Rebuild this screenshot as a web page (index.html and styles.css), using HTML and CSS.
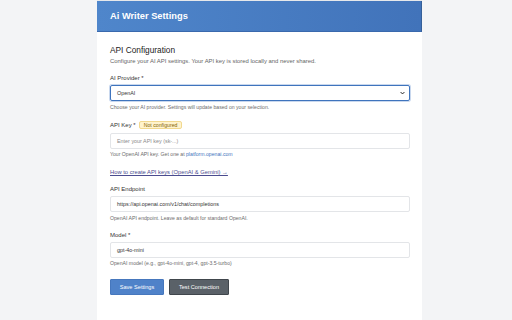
FILE: index.html
```html
<!DOCTYPE html>
<html lang="en">
<head>
<meta charset="utf-8">
<title>Ai Writer Settings</title>
<link rel="stylesheet" href="styles.css">
</head>
<body>
<div class="card">
  <header class="header"><h1 class="title">Ai Writer Settings</h1></header>
  <main class="content">
    <h2 class="section-title">API Configuration</h2>
    <p class="section-desc">Configure your AI API settings. Your API key is stored locally and never shared.</p>

    <div class="field">
      <label class="label">AI Provider *</label>
      <div class="select focused"><span>OpenAI</span><svg class="chev" viewBox="0 0 8 6" width="5" height="4"><path d="M1 1.5 L4 4.5 L7 1.5" fill="none" stroke="#222" stroke-width="1.6"/></svg></div>
      <p class="help">Choose your AI provider. Settings will update based on your selection.</p>
    </div>

    <div class="field">
      <div class="label-row"><label class="label">API Key *</label><span class="badge">Not configured</span></div>
      <div class="input placeholder">Enter your API key (sk-...)</div>
      <p class="help">Your OpenAI API key. Get one at <a class="help-link" href="#">platform.openai.com</a></p>
    </div>

    <a class="guide-link" href="#">How to create API keys (OpenAI &amp; Gemini) →</a>

    <div class="field">
      <label class="label">API Endpoint</label>
      <div class="input">https://api.openai.com/v1/chat/completions</div>
      <p class="help">OpenAI API endpoint. Leave as default for standard OpenAI.</p>
    </div>

    <div class="field">
      <label class="label">Model *</label>
      <div class="input">gpt-4o-mini</div>
      <p class="help">OpenAI model (e.g., gpt-4o-mini, gpt-4, gpt-3.5-turbo)</p>
    </div>

    <div class="actions">
      <button class="btn btn-primary">Save Settings</button>
      <button class="btn btn-secondary">Test Connection</button>
    </div>
  </main>
</div>
</body>
</html>
```

FILE: styles.css
```css
* { box-sizing: border-box; }
html, body { margin: 0; padding: 0; }
body {
  background: #f3f4f6;
  font-family: "Liberation Sans", Arial, sans-serif;
  color: #333;
}
.card {
  width: 325px;
  min-height: 320px;
  margin-left: 97px;
  background: #fff;
  border-top: 1px solid #e6e8eb;
}
.header {
  height: 31px;
  background: linear-gradient(90deg, #4f86cb 0%, #4173ba 100%);
  border-right: 1px solid #356099;
  border-bottom: 1px solid #3a69ad;
  display: flex;
  align-items: center;
  padding-left: 13px;
}
.title {
  margin: 0;
  color: #fff;
  font-size: 9.3px;
  font-weight: 700;
}
.content {
  padding: 13px 12px 0 13px;
}
.section-title {
  margin: 0;
  font-size: 8.3px;
  line-height: 10px;
  font-weight: 500;
  color: #222;
}
.section-desc {
  margin: 3px 0 0;
  font-size: 5.9px;
  line-height: 6px;
  color: #666;
}
.field { margin-top: 10px; }
.label-row { display: flex; align-items: center; gap: 3px; height: 10px; }
.label {
  display: block;
  font-size: 6px;
  line-height: 8px;
  color: #333;
}
.badge {
  font-size: 5.2px;
  line-height: 6px;
  padding: 0 4px;
  background: #fff3cd;
  border: 1px solid #f2d98f;
  border-radius: 2px;
  color: #856404;
}
.select, .input {
  margin-top: 3px;
  height: 16px;
  border: 1px solid #e3e5e8;
  border-radius: 2px;
  display: flex;
  align-items: center;
  padding: 0 6px;
  font-size: 5.4px;
  color: #333;
}
.select { justify-content: space-between; padding: 0 4px 0 6px; }
.select.focused {
  border-color: #3f74bd;
  box-shadow: 0 0 0 1px #c9d8ee;
}
.placeholder { color: #8a8a8a; }
.help {
  margin: 2.5px 0 0;
  font-size: 5.15px;
  line-height: 6px;
  color: #6b6b6b;
}
.help-link { color: #3f74bd; text-decoration: none; }
.guide-link {
  display: block;
  margin-top: 11px;
  font-size: 5.8px;
  line-height: 8px;
  color: #4b4c8f;
  text-decoration: underline;
}
.guide-link + .field { margin-top: 9px; }
.actions {
  display: flex;
  gap: 5px;
  margin-top: 13px;
}
.btn {
  height: 16px;
  border-radius: 1px;
  font-family: inherit;
  font-size: 5.6px;
  color: #fff;
  padding: 0;
}
.btn-primary {
  width: 54px;
  background: #4f82c9;
  border: 1px solid #4677bd;
}
.btn-secondary {
  width: 60px;
  background: #5a6168;
  border: 1px solid #40464c;
}
```
